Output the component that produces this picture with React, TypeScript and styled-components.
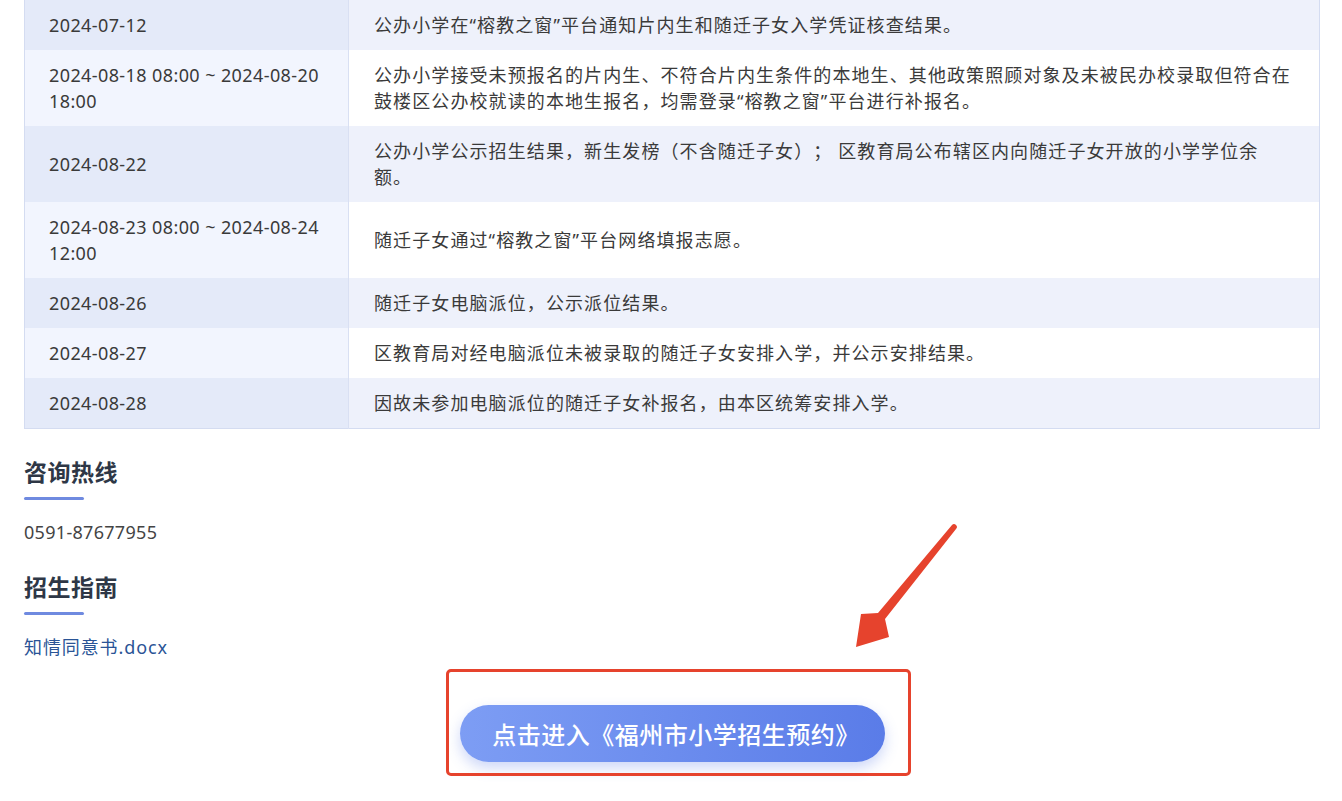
import React from 'react'
import styled, { createGlobalStyle } from 'styled-components'

const GlobalStyle = createGlobalStyle`
  body {
    margin: 0;
    background: #ffffff;
    font-family: "Noto Sans", "Noto Sans CJK SC", sans-serif;
  }
`

const Page = styled.div`
  padding: 0 22px 30px 24px;
  color: #3a3a3a;
  font-size: 18px;
  letter-spacing: 1.1px;
  text-spacing-trim: space-all;
`

const Table = styled.table`
  width: 100%;
  border-collapse: collapse;
  table-layout: fixed;
  border: 1px solid #d4dcf1;
  border-top: none;
`

const DateCell = styled.td<{ $odd: boolean }>`
  width: 275px;
  padding: 12px 24px 12px 24px;
  line-height: 26px;
  letter-spacing: 0.4px;
  vertical-align: middle;
  background: ${(p) => (p.$odd ? '#e4eaf9' : '#f2f5fe')};
  border-right: 1px solid #d9e0f3;
`

const DescCell = styled.td<{ $odd: boolean }>`
  padding: 12px 25px;
  line-height: 26px;
  vertical-align: middle;
  background: ${(p) => (p.$odd ? '#eef1fb' : '#ffffff')};
`

const Section = styled.div`
  margin-top: 28px;
`

const SectionTitle = styled.div`
  font-size: 23px;
  font-weight: 700;
  line-height: 30px;
  letter-spacing: 0.5px;
  color: #2e3746;
`

const TitleBar = styled.div`
  width: 60px;
  height: 3px;
  margin-top: 10px;
  border-radius: 2px;
  background: #6f8ae0;
`

const Phone = styled.div`
  margin-top: 20px;
  line-height: 24px;
  letter-spacing: 0.3px;
  color: #444444;
`

const DocLink = styled.a`
  display: inline-block;
  margin-top: 20px;
  line-height: 24px;
  letter-spacing: 0.9px;
  color: #2a5496;
  text-decoration: none;
`

const ButtonArea = styled.div`
  display: flex;
  justify-content: center;
  margin-top: 46px;
`

const ButtonWrap = styled.div`
  position: relative;
`

const EnterButton = styled.button`
  width: 425px;
  height: 57px;
  padding: 0 0 0 8px;
  border: none;
  border-radius: 29px;
  background: linear-gradient(90deg, #7d9df4 0%, #5a7ce8 100%);
  box-shadow: 0 6px 14px rgba(90, 124, 232, 0.3);
  color: #ffffff;
  font-family: "Noto Sans CJK SC", sans-serif;
  font-size: 24px;
  font-weight: 500;
  letter-spacing: 0.5px;
  text-spacing-trim: space-all;
  cursor: pointer;
`

const Highlight = styled.div`
  position: absolute;
  top: -36px;
  left: -14px;
  right: -26px;
  bottom: -14px;
  border: 3px solid #e6432d;
  border-radius: 5px;
  pointer-events: none;
`

const Arrow = styled.svg`
  position: absolute;
  left: 381px;
  top: -191px;
  width: 130px;
  height: 145px;
`

const rows: [string, string][] = [
  ['2024-07-12', '公办小学在“榕教之窗”平台通知片内生和随迁子女入学凭证核查结果。'],
  [
    '2024-08-18 08:00 ~ 2024-08-20 18:00',
    '公办小学接受未预报名的片内生、不符合片内生条件的本地生、其他政策照顾对象及未被民办校录取但符合在鼓楼区公办校就读的本地生报名，均需登录“榕教之窗”平台进行补报名。',
  ],
  ['2024-08-22', '公办小学公示招生结果，新生发榜（不含随迁子女）； 区教育局公布辖区内向随迁子女开放的小学学位余额。'],
  ['2024-08-23 08:00 ~ 2024-08-24 12:00', '随迁子女通过“榕教之窗”平台网络填报志愿。'],
  ['2024-08-26', '随迁子女电脑派位，公示派位结果。'],
  ['2024-08-27', '区教育局对经电脑派位未被录取的随迁子女安排入学，并公示安排结果。'],
  ['2024-08-28', '因故未参加电脑派位的随迁子女补报名，由本区统筹安排入学。'],
]

const App = () => {
  return (
    <Page>
      <GlobalStyle />
      <Table>
        <tbody>
          {rows.map(([date, desc], i) => (
            <tr key={date}>
              <DateCell $odd={i % 2 === 0}>{date}</DateCell>
              <DescCell $odd={i % 2 === 0}>{desc}</DescCell>
            </tr>
          ))}
        </tbody>
      </Table>

      <Section>
        <SectionTitle>咨询热线</SectionTitle>
        <TitleBar />
        <Phone>0591-87677955</Phone>
      </Section>

      <Section>
        <SectionTitle>招生指南</SectionTitle>
        <TitleBar />
        <DocLink href="#">知情同意书.docx</DocLink>
      </Section>

      <ButtonArea>
        <ButtonWrap>
          <EnterButton>点击进入《福州市小学招生预约》</EnterButton>
          <Highlight />
          <Arrow viewBox="0 0 130 145">
            <path
              d="M15 133 L20 100 L37 99 L111 11 A2.6 2.6 0 0 1 115 15 L44 105 L48 123 Z"
              fill="#e6432d"
            />
          </Arrow>
        </ButtonWrap>
      </ButtonArea>
    </Page>
  )
}

export default App
